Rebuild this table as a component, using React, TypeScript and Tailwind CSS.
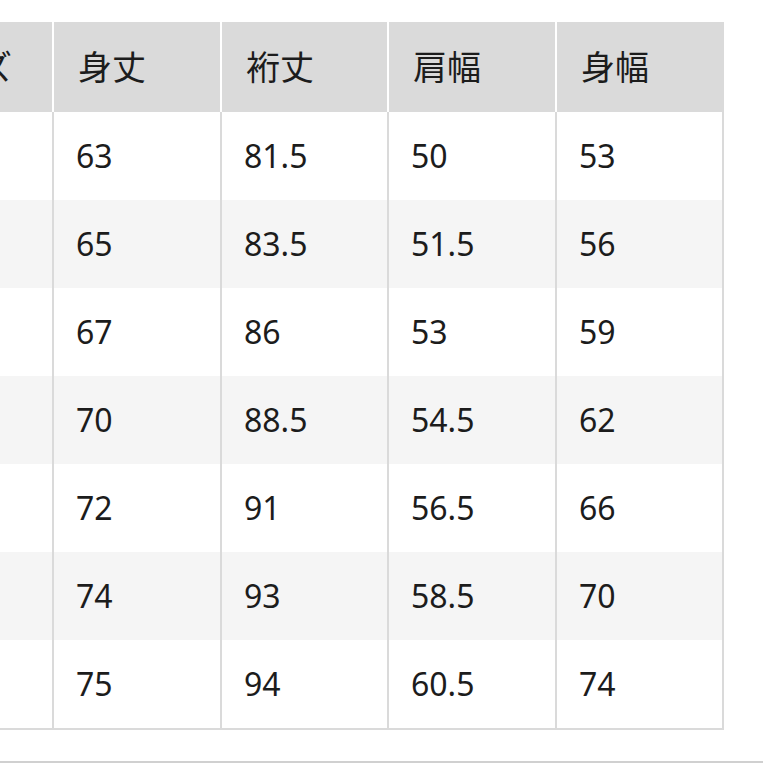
import React from "react";

const headers = ["サイズ", "身丈", "裄丈", "肩幅", "身幅"];
const widths = ["w-[167px]", "w-[168px]", "w-[167px]", "w-[168px]", "w-[167px]"];

const rows: string[][] = [
  ["63", "81.5", "50", "53"],
  ["65", "83.5", "51.5", "56"],
  ["67", "86", "53", "59"],
  ["70", "88.5", "54.5", "62"],
  ["72", "91", "56.5", "66"],
  ["74", "93", "58.5", "70"],
  ["75", "94", "60.5", "74"],
];

export default function App() {
  return (
    <div
      className="h-[763px] w-[763px] overflow-hidden bg-white text-[#1c1c1c]"
      style={{ fontFamily: '"Noto Sans", "Noto Sans CJK JP", sans-serif' }}
    >
      <div className="pt-[22px]">
        <div className="ml-[-113px] w-[837px] border-b-2 border-[#dadada]">
          <div className="flex h-[90px] bg-[#dadada]">
            {headers.map((h, i) => (
              <div
                key={h}
                className={[
                  "flex shrink-0 items-center pl-[24px] text-[34px] leading-none",
                  widths[i],
                  i < headers.length - 1 ? "border-r-2 border-white" : "",
                ].join(" ")}
              >
                {h}
              </div>
            ))}
          </div>
          {rows.map((r, ri) => (
            <div
              key={ri}
              className={["flex h-[88px]", ri % 2 === 1 ? "bg-[#f5f5f5]" : "bg-white"].join(" ")}
            >
              <div className="w-[167px] shrink-0 border-r-2 border-[#dadada]" />
              {r.map((c, ci) => (
                <div
                  key={ci}
                  className={[
                    "flex shrink-0 items-center border-r-2 border-[#dadada] pl-[22px] text-[32px] leading-none",
                    widths[ci + 1],
                  ].join(" ")}
                >
                  {c}
                </div>
              ))}
            </div>
          ))}
        </div>
        <div className="mt-[31px] h-[2px] bg-[#d0d0d0]" />
      </div>
    </div>
  );
}
